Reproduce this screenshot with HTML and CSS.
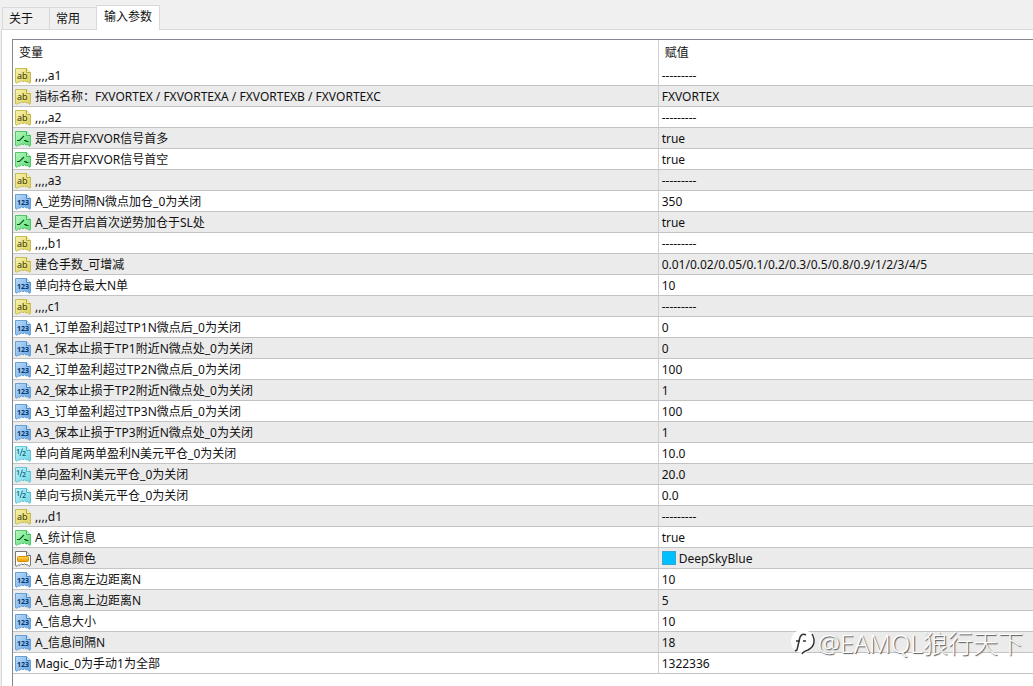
FILE: index.html
```
<!DOCTYPE html>
<html lang="zh-CN">
<head>
<meta charset="utf-8">
<meta name="viewport" content="width=device-width, initial-scale=1">
<title>输入参数</title>
<link rel="stylesheet" href="styles.css">
</head>
<body>
<svg class="defs" aria-hidden="true">
  <defs>
    <linearGradient id="gy" x1="0" y1="0" x2="1" y2="1"><stop offset="0" stop-color="#f8f3ac"/><stop offset="1" stop-color="#ddd05a"/></linearGradient>
    <linearGradient id="gg" x1="0" y1="0" x2="1" y2="1"><stop offset="0" stop-color="#b4f8bd"/><stop offset="1" stop-color="#5fdc78"/></linearGradient>
    <linearGradient id="gb" x1="0" y1="0" x2="1" y2="1"><stop offset="0" stop-color="#b9dcfb"/><stop offset="1" stop-color="#68a5e2"/></linearGradient>
    <linearGradient id="gc" x1="0" y1="0" x2="1" y2="1"><stop offset="0" stop-color="#bdf4fb"/><stop offset="1" stop-color="#6fd4e6"/></linearGradient>
    <linearGradient id="go" x1="0" y1="0" x2="0" y2="1"><stop offset="0" stop-color="#ffd75a"/><stop offset="1" stop-color="#f39a00"/></linearGradient>
    <path id="sheet" d="M.5.5H11.5L15.5 4.5V14.5L14 15.3L12.5 13.5L11 14L9.5 12.8L8 13.8L6.5 12.8L5 14.3L3.5 13.8L2 15.3L.5 14.5Z"/>
    <path id="fold" d="M11.5.5V4.5H15.5"/>
    <symbol id="str" viewBox="0 0 16 16"><use href="#sheet" fill="url(#gy)" stroke="#c9bd5a"/><use href="#fold" fill="#fff8b8" stroke="#b5a83c"/><text class="glyph" x="2" y="11" font-size="9" fill="#2e2a00">ab</text></symbol>
    <symbol id="bool" viewBox="0 0 16 16"><use href="#sheet" fill="url(#gg)" stroke="#55c46d"/><use href="#fold" fill="#c8ffcf" stroke="#3eb558"/><path d="M2 9.5H4.5L9 5M9 9.5H11V10.5H13.500" fill="none" stroke="#075a1c" stroke-width="1.200"/></symbol>
    <symbol id="int" viewBox="0 0 16 16"><use href="#sheet" fill="url(#gb)" stroke="#6a9fd2"/><use href="#fold" fill="#d5ebff" stroke="#4c86bf"/><text class="glyph bold" x="2" y="11" font-size="7" fill="#06366e">123</text></symbol>
    <symbol id="dbl" viewBox="0 0 16 16"><use href="#sheet" fill="url(#gc)" stroke="#66c4d5"/><use href="#fold" fill="#d5faff" stroke="#4bb2c5"/><text class="glyph semi" x="1" y="8" font-size="7" fill="#056073">1</text><path d="M5 10L7.5 2.5" stroke="#056073" stroke-width=".8"/><text class="glyph semi" x="7" y="10" font-size="7" fill="#056073">2</text></symbol>
    <symbol id="color" viewBox="0 0 16 16"><use href="#sheet" fill="#fff" stroke="#777"/><use href="#fold" fill="#eee" stroke="#777"/><rect x="2.5" y="5.5" width="11" height="5" rx="1" fill="url(#go)" stroke="#d98a00"/></symbol>
  </defs>
</svg>

<div class="tabs" role="tablist">
  <button class="tab" type="button" role="tab" aria-selected="false">关于</button>
  <button class="tab" type="button" role="tab" aria-selected="false">常用</button>
  <button class="tab active" type="button" role="tab" aria-selected="true">输入参数</button>
</div>

<main class="panel" role="tabpanel">
  <div class="list">
    <table class="params">
      <thead><tr><th class="name">变量</th><th>赋值</th></tr></thead>
      <tbody>
        <tr><td><svg class="icon"><use href="#str"/></svg>,,,,a1</td><td>---------</td></tr>
        <tr><td><svg class="icon"><use href="#str"/></svg>指标名称：FXVORTEX / FXVORTEXA / FXVORTEXB / FXVORTEXC</td><td>FXVORTEX</td></tr>
        <tr><td><svg class="icon"><use href="#str"/></svg>,,,,a2</td><td>---------</td></tr>
        <tr><td><svg class="icon"><use href="#bool"/></svg>是否开启FXVOR信号首多</td><td>true</td></tr>
        <tr><td><svg class="icon"><use href="#bool"/></svg>是否开启FXVOR信号首空</td><td>true</td></tr>
        <tr><td><svg class="icon"><use href="#str"/></svg>,,,,a3</td><td>---------</td></tr>
        <tr><td><svg class="icon"><use href="#int"/></svg>A_逆势间隔N微点加仓_0为关闭</td><td>350</td></tr>
        <tr><td><svg class="icon"><use href="#bool"/></svg>A_是否开启首次逆势加仓于SL处</td><td>true</td></tr>
        <tr><td><svg class="icon"><use href="#str"/></svg>,,,,b1</td><td>---------</td></tr>
        <tr><td><svg class="icon"><use href="#str"/></svg>建仓手数_可增减</td><td>0.01/0.02/0.05/0.1/0.2/0.3/0.5/0.8/0.9/1/2/3/4/5</td></tr>
        <tr><td><svg class="icon"><use href="#int"/></svg>单向持仓最大N单</td><td>10</td></tr>
        <tr><td><svg class="icon"><use href="#str"/></svg>,,,,c1</td><td>---------</td></tr>
        <tr><td><svg class="icon"><use href="#int"/></svg>A1_订单盈利超过TP1N微点后_0为关闭</td><td>0</td></tr>
        <tr><td><svg class="icon"><use href="#int"/></svg>A1_保本止损于TP1附近N微点处_0为关闭</td><td>0</td></tr>
        <tr><td><svg class="icon"><use href="#int"/></svg>A2_订单盈利超过TP2N微点后_0为关闭</td><td>100</td></tr>
        <tr><td><svg class="icon"><use href="#int"/></svg>A2_保本止损于TP2附近N微点处_0为关闭</td><td>1</td></tr>
        <tr><td><svg class="icon"><use href="#int"/></svg>A3_订单盈利超过TP3N微点后_0为关闭</td><td>100</td></tr>
        <tr><td><svg class="icon"><use href="#int"/></svg>A3_保本止损于TP3附近N微点处_0为关闭</td><td>1</td></tr>
        <tr><td><svg class="icon"><use href="#dbl"/></svg>单向首尾两单盈利N美元平仓_0为关闭</td><td>10.0</td></tr>
        <tr><td><svg class="icon"><use href="#dbl"/></svg>单向盈利N美元平仓_0为关闭</td><td>20.0</td></tr>
        <tr><td><svg class="icon"><use href="#dbl"/></svg>单向亏损N美元平仓_0为关闭</td><td>0.0</td></tr>
        <tr><td><svg class="icon"><use href="#str"/></svg>,,,,d1</td><td>---------</td></tr>
        <tr><td><svg class="icon"><use href="#bool"/></svg>A_统计信息</td><td>true</td></tr>
        <tr><td><svg class="icon"><use href="#color"/></svg>A_信息颜色</td><td><span class="swatch"></span>DeepSkyBlue</td></tr>
        <tr><td><svg class="icon"><use href="#int"/></svg>A_信息离左边距离N</td><td>10</td></tr>
        <tr><td><svg class="icon"><use href="#int"/></svg>A_信息离上边距离N</td><td>5</td></tr>
        <tr><td><svg class="icon"><use href="#int"/></svg>A_信息大小</td><td>10</td></tr>
        <tr><td><svg class="icon"><use href="#int"/></svg>A_信息间隔N</td><td>18</td></tr>
        <tr><td><svg class="icon"><use href="#int"/></svg>Magic_0为手动1为全部</td><td>1322336</td></tr>
      </tbody>
    </table>
  </div>
</main>

<div class="watermark">
  <svg class="logo" viewBox="0 0 28 28" aria-hidden="true">
    <path d="M12 1C5 1 1 6 1 12.5C1 19 5 23 11 23.5L13 27L17 23C22 21 25 17 25 12C25 5 19 1 12 1Z" fill="#fff"/>
    <path d="M16 6C12 4 10 7 9.5 10L7 21L5 22M6 12H10M13 12H16" fill="none" stroke="#333" stroke-width="1.5"/>
    <path d="M22 5C26 12 24 18 18 21C15 22 13 23 12 25" fill="none" stroke="#333" stroke-width="1.5"/>
  </svg>
  <span>@EAMQL狼行天下</span>
</div>
</body>
</html>
```
FILE: styles.css
```
* {
  box-sizing: border-box;
}

body {
  display: flex;
  flex-direction: column;
  height: 100vh;
  margin: 0;
  overflow: hidden;
  background: #f0f0f0;
  color: #111;
  font: 12px/20px "Noto Sans", "Noto Sans CJK SC", sans-serif;
  font-kerning: none;
}

.defs {
  position: absolute;
  width: 0;
  height: 0;
}

.tabs {
  display: flex;
  align-items: flex-end;
  padding: 5px 0 0 2px;
}

.tab {
  height: 22px;
  padding: 0 16px 0 6px;
  border: 1px solid #d9d9d9;
  border-width: 1px 0 0 1px;
  background: #f0f0f0;
  color: inherit;
  font: inherit;
}

.tab.active {
  z-index: 1;
  height: 25px;
  margin-bottom: -1px;
  padding: 0 7px 2px;
  border-right-width: 1px;
  background: #fff;
}

.panel {
  display: flex;
  flex: 1;
  min-height: 0;
  margin-left: 1px;
  padding: 9px 0 0 10px;
  border: 1px solid #d9d9d9;
  border-width: 1px 0 0 1px;
  background: #fff;
}

.list {
  flex: 1;
  border: 1px solid #828790;
  border-width: 1px 0 0 1px;
}

.params {
  width: 100%;
  border-collapse: separate;
  border-spacing: 0;
  table-layout: fixed;
}

.params th {
  height: 25px;
  padding: 0 6px;
  font-weight: 400;
  text-align: left;
}

.params .name {
  width: 63.3%;
}

.params td {
  height: 21px;
  padding: 2px 3px 0;
  border-bottom: 1px solid #c3c3c3;
  line-height: 18px;
  white-space: nowrap;
}

.params tr > :first-child {
  border-right: 1px solid #d0d0d0;
}

.params td:first-child {
  padding-left: 2px;
}

.params tbody tr:first-child td,
.params tbody tr:nth-child(odd) {
  background: #fff;
}

.params tbody tr:nth-child(even) {
  background: #ebebeb;
}

.icon {
  width: 16px;
  height: 16px;
  margin-right: 4px;
  vertical-align: -4px;
}

.glyph {
  font-family: "Open Sans", sans-serif;
}

.semi {
  font-weight: 600;
}

.bold {
  font-weight: 700;
}

.swatch {
  display: inline-block;
  width: 14px;
  height: 14px;
  margin-right: 3px;
  border: 1px solid #3aa5d5;
  background: #00bfff;
  vertical-align: -2px;
}

.watermark {
  position: absolute;
  right: 10px;
  bottom: 27px;
  display: flex;
  align-items: center;
  color: #fff;
  font-size: 25px;
  font-weight: 300;
  line-height: 32px;
  text-shadow: 1px 1px 1px #555;
}

.logo {
  width: 28px;
  height: 28px;
}
```
